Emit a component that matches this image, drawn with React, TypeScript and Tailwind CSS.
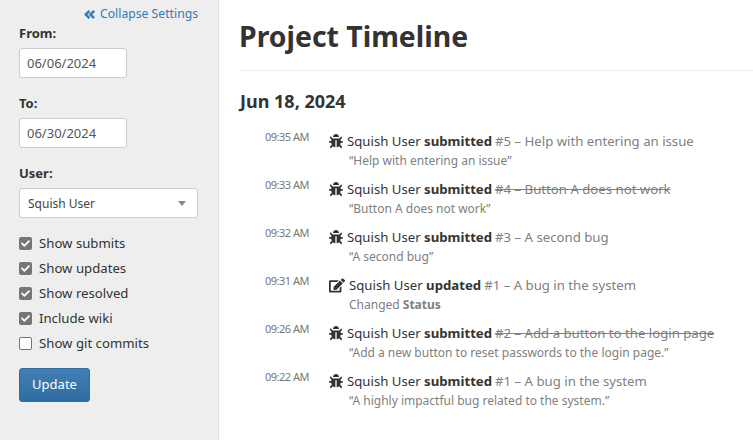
import type { JSX } from 'react';
import { FaAngleDoubleLeft, FaBug, FaCheck, FaEdit } from 'react-icons/fa';

const sans = 'font-["Noto_Sans",sans-serif]';

const checks = [
  { label: 'Show submits', on: true },
  { label: 'Show updates', on: true },
  { label: 'Show resolved', on: true },
  { label: 'Include wiki', on: true },
  { label: 'Show git commits', on: false },
];

type Item = {
  time: string;
  verb: string;
  ref: string;
  title: string;
  note: string;
  closed?: boolean;
  edit?: boolean;
};

const items: Item[] = [
  { time: '09:35 AM', verb: 'submitted', ref: '#5', title: 'Help with entering an issue', note: '“Help with entering an issue”' },
  { time: '09:33 AM', verb: 'submitted', ref: '#4', title: 'Button A does not work', note: '“Button A does not work”', closed: true },
  { time: '09:32 AM', verb: 'submitted', ref: '#3', title: 'A second bug', note: '“A second bug”' },
  { time: '09:31 AM', verb: 'updated', ref: '#1', title: 'A bug in the system', note: '', edit: true },
  { time: '09:26 AM', verb: 'submitted', ref: '#2', title: 'Add a button to the login page', note: '“Add a new button to reset passwords to the login page.”', closed: true },
  { time: '09:22 AM', verb: 'submitted', ref: '#1', title: 'A bug in the system', note: '“A highly impactful bug related to the system.”' },
];

function Sidebar(): JSX.Element {
  return (
    <aside className="flex h-[440px] w-[219px] shrink-0 flex-col border-r border-[#dddddd] bg-[#eeeeee] pl-[19px] pr-[20px] text-[13px] text-[#333333]">
      <a className="mt-[5px] flex h-[18px] items-center justify-end gap-[5px] text-[12.2px] text-[#337ab7]">
        <FaAngleDoubleLeft className="h-[13px] w-[11px] stroke-[30]" />
        Collapse Settings
      </a>
      <label className="mt-[1px] h-[18px] font-bold leading-[18px]">From:</label>
      <div className="mt-[6px] flex h-[30px] w-[108px] items-center rounded-[3px] border border-[#cccccc] bg-white pl-[7px] pt-[1px] text-[#555555]">06/06/2024</div>
      <label className="mt-[16px] h-[18px] font-bold leading-[18px]">To:</label>
      <div className="mt-[6px] flex h-[30px] w-[108px] items-center rounded-[3px] border border-[#cccccc] bg-white pl-[7px] pt-[1px] text-[#555555]">06/30/2024</div>
      <label className="mt-[16px] h-[18px] font-bold leading-[18px]">User:</label>
      <div className="mt-[6px] flex h-[30px] w-[179px] items-center justify-between rounded-[3px] border border-[#cccccc] bg-white pl-[8px] pr-[11px] pt-[1px] text-[12px] text-[#444444]">
        Squish User
        <span className="h-0 w-0 border-x-[4px] border-t-[5px] border-x-transparent border-t-[#888888]" />
      </div>
      <div className="mt-[19px] flex flex-col gap-[12px]">
        {checks.map((c) => (
          <div key={c.label} className="flex h-[13px] items-center gap-[7px]">
            {c.on ? (
              <span className="flex h-[13px] w-[13px] items-center justify-center rounded-[2px] bg-[#767676] text-white">
                <FaCheck className="h-[9px] w-[9px]" />
              </span>
            ) : (
              <span className="h-[13px] w-[13px] rounded-[2px] border border-[#767676] bg-white" />
            )}
            <span className="text-[13.2px]">{c.label}</span>
          </div>
        ))}
      </div>
      <button className="mt-[18px] h-[34px] w-[71px] rounded-[3px] border border-[#2e6da4] bg-gradient-to-b from-[#437fb5] to-[#2d6ca2] text-white">
        Update
      </button>
    </aside>
  );
}

function Row({ item }: { item: Item }): JSX.Element {
  return (
    <div className="flex h-[48px] text-[13.2px]">
      <div className="w-[64px] shrink-0 pt-[1px] text-[11px] leading-[14px] tracking-[-0.5px] text-[#777777]">{item.time}</div>
      <div className="min-w-0 whitespace-nowrap pt-[3px]">
        <div className="flex h-[18px] items-center leading-[18px] text-[#333333]">
          {item.edit ? <FaEdit className="mr-[4px] h-[15px] w-[16px]" /> : <FaBug className="mr-[4px] h-[14px] w-[14px]" />}
          <span>Squish User&nbsp;</span>
          <b>{item.verb}</b>
          <span className={`ml-[3px] text-[#808080] ${item.closed ? 'line-through' : ''}`}>
            {item.ref} – {item.title}
          </span>
        </div>
        <div className="ml-[20px] mt-[2px] h-[18px] text-[12px] leading-[18px] text-[#808080]">
          {item.edit ? (
            <>
              Changed <b>Status</b>
            </>
          ) : (
            item.note
          )}
        </div>
      </div>
    </div>
  );
}

export default function App(): JSX.Element {
  return (
    <div className={`flex h-[440px] w-[753px] overflow-hidden bg-white ${sans}`}>
      <Sidebar />
      <main className="min-w-0 flex-1 pl-[20px]">
        <h1 className="mt-[16px] h-[40px] text-[28.4px] font-bold leading-[40px] text-[#333333]">Project Timeline</h1>
        <hr className="mt-[14px] border-[#eeeeee]" />
        <h2 className="mt-[19px] h-[22px] pl-[1px] text-[18px] font-bold leading-[22px] text-[#333333]">Jun 18, 2024</h2>
        <div className="mt-[17px] pl-[26px]">
          {items.map((it, i) => (
            <Row key={i} item={it} />
          ))}
        </div>
      </main>
    </div>
  );
}
